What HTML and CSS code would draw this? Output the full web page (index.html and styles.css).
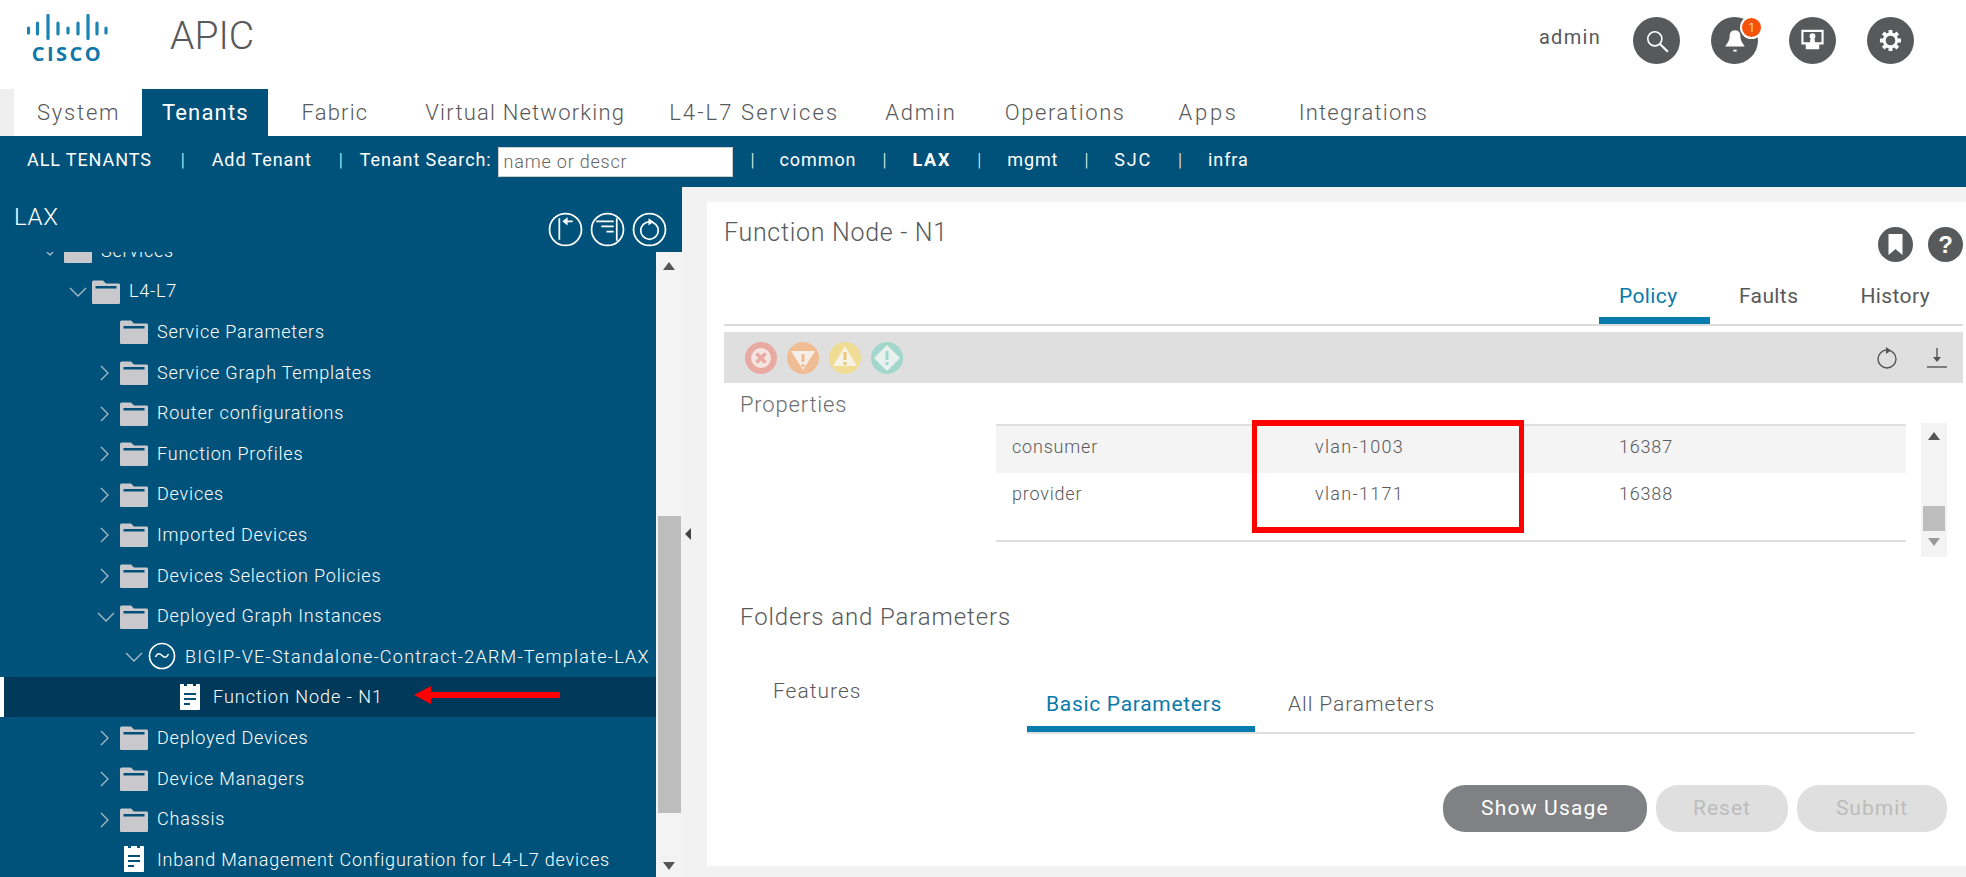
FILE: index.html
```html
<!DOCTYPE html>
<html lang="en">
<head>
<meta charset="utf-8">
<title>APIC</title>
<link rel="stylesheet" href="styles.css">
</head>
<body>
<svg class="sprite" aria-hidden="true">
  <symbol id="folder" viewBox="0 0 28 28">
    <path d="M0 5.500C0 4.500.5 3.500 1.500 3.500H11l3 3h12.500c1 0 1.500.7 1.500 1.500v17.500c0 1-.6 1.500-1.500 1.500h-25C.5 27 0 26.500 0 25.500z" fill="#c9c9cd"/>
    <rect x="3.500" y="9" width="21" height="2.500" fill="#00507a"/>
  </symbol>
  <symbol id="doc" viewBox="0 0 20 28">
    <path d="M1 1h3v2h3V1h6v2h3V1h3c.5 0 1 .4 1 1v24c0 .6-.5 1-1 1H1c-.5 0-1-.4-1-1V2c0-.6.5-1 1-1z" fill="#fff"/>
    <path d="M4 10h12v2H4zM4 15h12v2H4zM4 20h6v2H4z" fill="#00507a"/>
  </symbol>
  <symbol id="chev-r" viewBox="0 0 28 28"><path d="M9 8l7 7-7 7" fill="none" stroke="#a9bcc8" stroke-width="1.300"/></symbol>
  <symbol id="chev-d" viewBox="0 0 28 28"><path d="M6 11l8 8 8-8" fill="none" stroke="#a9bcc8" stroke-width="1.300"/></symbol>
</svg>

<header class="topbar">
  <div class="logo">
    <svg class="logo-bars" viewBox="0 0 81 26" width="81" height="26">
      <path d="M1.500 14v5M10.500 9v11M21 1.500v23M31 9v11M41 14v5M51 9v11M61 1.500v23M70 9v11M79 14v5" stroke="#1c84b4" stroke-width="3.200" stroke-linecap="round" fill="none"/>
    </svg>
    <span class="logo-word">CISCO</span>
  </div>
  <h1 class="app-name">APIC</h1>
  <div class="user-tools">
    <span class="user-name">admin</span>
    <span class="round-btn">
      <svg viewBox="0 0 24 24" width="26" height="26"><circle cx="10" cy="10" r="6.500" fill="none" stroke="#fff" stroke-width="1.500"/><path d="M14.500 14.500L22 22" stroke="#fff" stroke-width="2"/></svg>
    </span>
    <span class="round-btn">
      <svg viewBox="0 0 24 24" width="26" height="26"><path d="M12 2c4 0 5 3 5 6 0 4 3 7 4 9H3c1-2 4-5 4-9 0-3 1-6 5-6z" fill="#fff"/><path d="M10.500 20h3v1.800h-3z" fill="#fff"/></svg>
      <span class="badge">1</span>
    </span>
    <span class="round-btn">
      <svg viewBox="0 0 24 24" width="23" height="23"><path d="M1.500 2h21v13h-21z" fill="none" stroke="#fff" stroke-width="2.200"/><circle cx="12" cy="7.500" r="3" fill="#fff"/><path d="M10 10h4l1 5h4v6H5v-6h4z" fill="#fff"/></svg>
    </span>
    <span class="round-btn">
      <svg viewBox="0 0 24 24" width="23" height="23"><path d="M10 1h4v3l2 .8 2.200-2.200 2.800 2.800L18.800 7.600l.9 2.400H23v4h-3.300l-.9 2.400 2.200 2.200-2.800 2.800-2.200-2.200-2 .8v3h-4v-3l-2-.8-2.200 2.200-2.800-2.800 2.200-2.200-.9-2.400H1v-4h3.300l.9-2.400L3 5.400l2.800-2.800L8 4.800l2-.8z" fill="#fff"/><circle cx="12" cy="12" r="5" fill="#58595b"/></svg>
    </span>
  </div>
</header>

<nav class="main-nav">
  <span class="nav-stub"></span>
  <a class="nav-item nav-system">System</a>
  <a class="nav-item nav-active">Tenants</a>
  <a class="nav-item nav-fabric">Fabric</a>
  <a class="nav-item nav-vn">Virtual Networking</a>
  <a class="nav-item nav-l47">L4-L7 Services</a>
  <a class="nav-item nav-admin">Admin</a>
  <a class="nav-item nav-ops">Operations</a>
  <a class="nav-item nav-apps">Apps</a>
  <a class="nav-item nav-int">Integrations</a>
</nav>

<div class="tenant-bar">
  <a class="tb-item">ALL TENANTS</a><span class="tb-sep tb-sep-first">|</span>
  <a class="tb-item">Add Tenant</a><span class="tb-sep tb-sep-tight-r">|</span>
  <label class="tb-search">Tenant Search:<input class="tb-input" type="text" placeholder="name or descr"></label><span class="tb-sep tb-sep-tight-l">|</span>
  <a class="tb-item">common</a><span class="tb-sep">|</span>
  <a class="tb-item tb-bold">LAX</a><span class="tb-sep">|</span>
  <a class="tb-item">mgmt</a><span class="tb-sep">|</span>
  <a class="tb-item tb-sjc">SJC</a><span class="tb-sep">|</span>
  <a class="tb-item">infra</a>
</div>

<main class="workspace">
  <aside class="left-panel">
    <div class="left-head">
      <span class="left-title">LAX</span>
      <div class="left-tools">
        <svg class="ring" viewBox="0 0 34 34"><circle cx="17" cy="17" r="15.500"/><path d="M11 6v21M18 9h6"/><path class="ring-fill" d="M19 5l-5 4 5 4z"/></svg>
        <svg class="ring" viewBox="0 0 34 34"><circle cx="17" cy="17" r="15.500"/><path d="M26 6v22M6 9h17M11 14h12M16 19h7"/></svg>
        <svg class="ring" viewBox="0 0 34 34"><circle cx="17" cy="17" r="15.500"/><circle cx="17" cy="18" r="8.500"/><path class="ring-fill" d="M16 6l5 3.500-5 3.500z"/></svg>
      </div>
    </div>
    <div class="tree-wrap">
      <ul class="tree">
        <li class="row lv0"><svg class="slot"><use href="#chev-d"/></svg><svg class="slot"><use href="#folder"/></svg><span class="label">Services</span></li>
        <li class="row lv1"><svg class="slot"><use href="#chev-d"/></svg><svg class="slot"><use href="#folder"/></svg><span class="label">L4-L7</span></li>
        <li class="row lv2"><span class="slot"></span><svg class="slot"><use href="#folder"/></svg><span class="label">Service Parameters</span></li>
        <li class="row lv2"><svg class="slot"><use href="#chev-r"/></svg><svg class="slot"><use href="#folder"/></svg><span class="label">Service Graph Templates</span></li>
        <li class="row lv2"><svg class="slot"><use href="#chev-r"/></svg><svg class="slot"><use href="#folder"/></svg><span class="label">Router configurations</span></li>
        <li class="row lv2"><svg class="slot"><use href="#chev-r"/></svg><svg class="slot"><use href="#folder"/></svg><span class="label">Function Profiles</span></li>
        <li class="row lv2"><svg class="slot"><use href="#chev-r"/></svg><svg class="slot"><use href="#folder"/></svg><span class="label">Devices</span></li>
        <li class="row lv2"><svg class="slot"><use href="#chev-r"/></svg><svg class="slot"><use href="#folder"/></svg><span class="label">Imported Devices</span></li>
        <li class="row lv2"><svg class="slot"><use href="#chev-r"/></svg><svg class="slot"><use href="#folder"/></svg><span class="label">Devices Selection Policies</span></li>
        <li class="row lv2"><svg class="slot"><use href="#chev-d"/></svg><svg class="slot"><use href="#folder"/></svg><span class="label">Deployed Graph Instances</span></li>
        <li class="row lv3"><svg class="slot"><use href="#chev-d"/></svg>
          <svg class="slot" viewBox="0 0 28 28"><circle cx="14" cy="14" r="12.500" fill="none" stroke="#fff" stroke-width="1.600"/><path d="M7.500 15c2-4 4-4 6.500-1.500s4.500 2.500 6.500-1.500" fill="none" stroke="#fff" stroke-width="1.600"/></svg>
          <span class="label label-wide">BIGIP-VE-Standalone-Contract-2ARM-Template-LAX</span></li>
        <li class="row lv4 row-selected"><span class="slot slot-none"></span><svg class="slot doc-slot"><use href="#doc"/></svg><span class="label label-node">Function Node - N1</span></li>
        <li class="row lv2"><svg class="slot"><use href="#chev-r"/></svg><svg class="slot"><use href="#folder"/></svg><span class="label">Deployed Devices</span></li>
        <li class="row lv2"><svg class="slot"><use href="#chev-r"/></svg><svg class="slot"><use href="#folder"/></svg><span class="label">Device Managers</span></li>
        <li class="row lv2"><svg class="slot"><use href="#chev-r"/></svg><svg class="slot"><use href="#folder"/></svg><span class="label">Chassis</span></li>
        <li class="row lv2"><span class="slot"></span><svg class="slot doc-slot"><use href="#doc"/></svg><span class="label">Inband Management Configuration for L4-L7 devices</span></li>
      </ul>
      <div class="vscroll tree-scroll">
        <span class="arrow-up"></span>
        <span class="thumb tree-thumb"></span>
        <span class="arrow-down"></span>
      </div>
    </div>
    <svg class="red-arrow" viewBox="0 0 146 18" width="146" height="18"><path d="M0 9L17 0v6h129v6H17v6z" fill="#f00"/></svg>
  </aside>

  <div class="splitter"><span class="split-handle"></span></div>

  <section class="content">
    <div class="card">
      <div class="title-row">
        <h2 class="page-title">Function Node - N1</h2>
        <div class="title-tools">
          <span class="mini-btn"><svg viewBox="0 0 35 35" width="35" height="35"><path d="M10.500 7h14v21l-7-6-7 6z" fill="#fff"/></svg></span>
          <span class="mini-btn mini-help">?</span>
        </div>
      </div>
      <div class="tabs">
        <a class="tab tab-on">Policy</a>
        <a class="tab tab-faults">Faults</a>
        <a class="tab tab-history">History</a>
      </div>
      <div class="toolbar">
        <div class="faults">
          <svg class="fault" viewBox="0 0 32 32"><circle cx="16" cy="16" r="16" fill="#e9aaa2"/><circle cx="16" cy="16" r="10" fill="#f3e3e1"/><path d="M11.500 11.500l9 9M20.500 11.500l-9 9" stroke="#e9aaa2" stroke-width="3.500"/></svg>
          <svg class="fault" viewBox="0 0 32 32"><circle cx="16" cy="16" r="16" fill="#efbc93"/><path d="M4 9h24L16 28z" fill="#f5eee6"/><path d="M16 12v8M16 22v3" stroke="#efbc93" stroke-width="3"/></svg>
          <svg class="fault" viewBox="0 0 32 32"><circle cx="16" cy="16" r="16" fill="#f0dc92"/><path d="M16 4l12 20H4z" fill="#f6f2e4"/><path d="M16 10v8M16 20v3" stroke="#e8c878" stroke-width="3"/></svg>
          <svg class="fault" viewBox="0 0 32 32"><circle cx="16" cy="16" r="16" fill="#a3d6cd"/><path d="M16 3l13 13-13 13L3 16z" fill="#e9f1ef"/><path d="M16 9v9M16 20v3" stroke="#a3d6cd" stroke-width="3"/></svg>
        </div>
        <div class="tool-right">
          <svg viewBox="0 0 24 24" width="24" height="24"><circle cx="12" cy="13" r="9" fill="none" stroke="#555" stroke-width="1.400"/><path d="M11 1l5 3.500-5 3.500z" fill="#555"/></svg>
          <svg viewBox="0 0 24 24" width="24" height="24"><path d="M12 2v13" stroke="#555" stroke-width="1.400"/><path d="M8 11h8l-4 5z" fill="#555"/><path d="M2 21h20" stroke="#555" stroke-width="1.400"/></svg>
        </div>
      </div>
      <h3 class="section-title">Properties</h3>
      <div class="table-row">
        <div class="table">
          <div class="tr tr-alt"><span class="td td-a">consumer</span><span class="td td-b">vlan-1003</span><span class="td">16387</span></div>
          <div class="tr"><span class="td td-a">provider</span><span class="td td-b">vlan-1171</span><span class="td">16388</span></div>
        </div>
        <div class="vscroll table-scroll">
          <span class="arrow-up"></span>
          <span class="thumb table-thumb"></span>
          <span class="arrow-down arrow-dim"></span>
        </div>
      </div>
      <h3 class="section-title folders">Folders and Parameters</h3>
      <div class="features">
        <span class="features-label">Features</span>
        <div class="subtabs">
          <a class="subtab subtab-on">Basic Parameters</a>
          <a class="subtab">All Parameters</a>
        </div>
      </div>
      <div class="actions">
        <button class="btn btn-usage">Show Usage</button>
        <button class="btn btn-off btn-reset">Reset</button>
        <button class="btn btn-off btn-submit">Submit</button>
      </div>
      <div class="red-box"></div>
    </div>
  </section>
</main>
</body>
</html>
```

FILE: styles.css
```css
* { box-sizing: border-box; }
html, body { margin: 0; padding: 0; }
body {
  width: 1966px;
  height: 877px;
  overflow: hidden;
  background: #fff;
  color: #58595b;
  font-family: Roboto, "Liberation Sans", sans-serif;
  font-weight: 300;
  display: flex;
  flex-direction: column;
}
.sprite { display: none; }
h1, h2, h3, ul { margin: 0; padding: 0; font-weight: 300; }
ul { list-style: none; }

/* top bar */
.topbar { height: 89px; flex: none; display: flex; padding-left: 27px; position: relative; }
.logo { width: 81px; padding-top: 14px; display: flex; flex-direction: column; align-items: center; }
.logo-bars { display: block; }
.logo-word {
  font: 700 20px/20px "Open Sans", "Liberation Sans", sans-serif;
  color: #0f78a8;
  letter-spacing: 2.500px;
  margin-top: 4px;
}
.app-name { margin-left: 62px; margin-top: 15px; font-size: 39px; line-height: 42px; color: #58595b; }
.user-tools { margin-left: auto; padding: 17px 52px 0 0; display: flex; gap: 31px; }
.user-name { font-size: 20px; font-weight: 400; line-height: 40px; margin-right: 1px; letter-spacing: 1.300px; }
.round-btn {
  width: 47px; height: 47px; border-radius: 50%; background: #58595b;
  display: flex; align-items: center; justify-content: center; position: relative;
}
.badge {
  position: absolute; left: 29px; top: -1px; width: 23px; height: 23px; border-radius: 50%;
  background: #f6520a; border: 2px solid #fff; color: #fff; font-size: 13px; line-height: 19px; text-align: center;
}

/* main nav */
.main-nav { height: 47px; flex: none; display: flex; align-items: stretch; font-size: 22px; letter-spacing: 1.200px; }
.nav-stub { width: 14px; background: #efefef; }
.nav-item { line-height: 47px; color: #58595b; }
.nav-system { margin-left: 23px; letter-spacing: 1.800px; }
.nav-active { margin-left: 22px; width: 126px; background: #00527a; color: #fff; text-align: center; font-weight: 400; }
.nav-fabric { margin-left: 33px; }
.nav-vn { margin-left: 57px; }
.nav-l47 { margin-left: 44px; letter-spacing: 2.100px; }
.nav-admin { margin-left: 46px; letter-spacing: 1.800px; }
.nav-ops { margin-left: 48px; letter-spacing: 1.600px; }
.nav-apps { margin-left: 53px; letter-spacing: 2.700px; }
.nav-int { margin-left: 60px; }

/* tenant bar */
.tenant-bar {
  height: 51px; flex: none; background: #00527a; color: #fff; display: flex; align-items: center;
  padding: 0 0 4px 27px; font-size: 18px; font-weight: 400; letter-spacing: .9px;
}
.tb-sep { margin: 0 26px; font-weight: 300; letter-spacing: 0; }
.tb-sep-first { margin: 0 27px 0 29px; }
.tb-sep-tight-r { margin: 0 17px 0 27px; }
.tb-sep-tight-l { margin: 0 25px 0 18px; }
.tb-bold { font-weight: 700; letter-spacing: 1.800px; }
.tb-sjc { letter-spacing: 1.800px; }
.tb-search { display: flex; align-items: center; gap: 6px; }
.tb-input {
  width: 235px; height: 30px; margin-top: 4px; border: 1px solid #ccc; background: #fff; padding: 0 5px;
  font: 300 18px Roboto, sans-serif; letter-spacing: .8px; color: #555;
}
.tb-input::placeholder { color: #666; opacity: 1; }

/* workspace */
.workspace { flex: 1; display: flex; min-height: 0; }
.left-panel { width: 682px; flex: none; background: #00527a; color: #fff; display: flex; flex-direction: column; position: relative; }
.left-head { height: 65px; flex: none; display: flex; padding: 12px 15px 0 14px; }
.left-title { font-size: 24px; line-height: 36px; letter-spacing: .7px; }
.left-tools { margin-left: auto; padding-top: 13px; display: flex; gap: 7px; }
.ring { width: 35px; height: 35px; fill: none; stroke: #fff; stroke-width: 1.700; }
.ring-fill { fill: #fff; stroke: none; }
.tree-wrap { flex: 1; display: flex; min-height: 0; overflow: hidden; }
.tree { flex: 1; margin-top: -22px; min-width: 0; }
.row { height: 40.600px; display: flex; align-items: center; font-size: 18px; white-space: nowrap; letter-spacing: .8px; }
.lv0 { padding-left: 36px; }
.lv1 { padding-left: 64px; }
.lv2 { padding-left: 92px; }
.lv3 { padding-left: 120px; }
.lv4 { padding-left: 148px; }
.slot { width: 28px; height: 28px; flex: none; display: block; }
.label { margin-left: 9px; }
.label-wide { letter-spacing: 1.250px; }
.label-node { letter-spacing: 1px; }
.row-selected { background: #00395a; border-left: 4px solid #fff; padding-left: 144px; }
.vscroll { background: #f3f3f3; display: flex; flex-direction: column; align-items: center; position: relative; }
.tree-scroll { width: 26px; flex: none; }
.arrow-up, .arrow-down { width: 0; height: 0; border-left: 6px solid transparent; border-right: 6px solid transparent; position: absolute; }
.arrow-up { border-bottom: 8px solid #555; }
.arrow-down { border-top: 8px solid #555; }
.arrow-dim { border-top-color: #999; }
.tree-scroll .arrow-up { top: 10px; }
.tree-scroll .arrow-down { bottom: 7px; }
.thumb { position: absolute; background: #bdbdbd; }
.tree-thumb { top: 264px; height: 297px; width: 23px; }
.red-arrow { position: absolute; left: 414px; top: 499px; }

.splitter { width: 25px; flex: none; background: #f2f2f2; position: relative; }
.split-handle {
  position: absolute; left: 3px; top: 341px; width: 0; height: 0;
  border-top: 6px solid transparent; border-bottom: 6px solid transparent; border-right: 6px solid #444;
}

/* content */
.content { flex: 1; min-width: 0; background: #f2f2f2; padding: 15px 0 11px 0; display: flex; }
.card { flex: 1; background: #fff; padding: 0 3px 0 17px; position: relative; min-width: 0; }
.title-row { height: 65px; display: flex; justify-content: space-between; }
.page-title { font-size: 25px; line-height: 30px; padding: 16px 0 0 0; color: #58595b; letter-spacing: .7px; }
.title-tools { display: flex; gap: 15px; padding-top: 25px; }
.mini-btn { width: 35px; height: 35px; border-radius: 50%; background: #58595b; display: block; }
.mini-help { color: #fff; font: 700 24px/35px "Liberation Sans", sans-serif; text-align: center; }
.tabs { height: 59px; display: flex; justify-content: flex-end; border-bottom: 2px solid #dcdcdc; padding-right: 33px; font-size: 21px; font-weight: 400; letter-spacing: .4px; }
.tab { height: 57px; padding-top: 17px; line-height: 24px; }
.tab-on { color: #0a7aaa; width: 111px; padding-left: 20px; border-bottom: 7px solid #067bad; }
.tab-faults { margin-left: 29px; }
.tab-history { margin-left: 62px; }
.toolbar { margin-top: 6px; height: 51px; background: #dfdfdf; display: flex; justify-content: space-between; align-items: center; padding: 0 14px 0 21px; }
.faults { display: flex; gap: 10px; }
.fault { width: 32px; height: 32px; }
.tool-right { display: flex; gap: 26px; }
.section-title { font-size: 22px; line-height: 41px; padding: 1px 0 0 16px; height: 41px; color: #6d6e70; letter-spacing: .8px; }
.table-row { display: flex; align-items: flex-start; padding-left: 272px; }
.table { width: 910px; height: 118px; border-top: 2px solid #dfdfdf; border-bottom: 2px solid #dfdfdf; font-size: 18px; letter-spacing: .8px; }
.tr { height: 46px; display: flex; align-items: center; padding: 0 0 6px 16px; }
.tr-alt { height: 47px; background: #f4f4f4; }
.td-a { width: 303px; }
.td-b { width: 304px; letter-spacing: 1.300px; }
.table-scroll { width: 26px; height: 134px; margin: -1px 0 0 15px; }
.table-scroll .arrow-up { top: 9px; }
.table-scroll .arrow-down { bottom: 11px; }
.table-thumb { top: 83px; height: 25px; width: 22px; }
.section-title.folders { font-size: 24px; line-height: 30px; height: 30px; padding-top: 1px; margin-top: 44px; color: #58595b; letter-spacing: .9px; }
.features { display: flex; align-items: flex-start; }
.features-label { width: 303px; padding: 45px 0 0 49px; font-size: 21px; line-height: 30px; color: #58595b; letter-spacing: 1px; }
.subtabs { width: 888px; margin-top: 57px; display: flex; border-bottom: 2px solid #dfdfdf; font-size: 21px; height: 46px; letter-spacing: .9px; }
.subtab { line-height: 32px; margin-left: 33px; }
.subtab-on { color: #0a7aaa; margin-left: 0; width: 228px; padding-left: 19px; border-bottom: 6px solid #067bad; font-weight: 400; letter-spacing: .7px; }
.actions { display: flex; justify-content: flex-end; gap: 9px; padding-right: 16px; margin-top: 51px; }
.btn { height: 47px; border: 0; border-radius: 22px; font: 400 21px Roboto, sans-serif; color: #fff; background: #808185; padding: 0 0 2px; letter-spacing: 1.200px; }
.btn-usage { width: 204px; }
.btn-off { background: #dfdfdf; color: #bcbcbc; letter-spacing: 1px; }
.btn-reset { width: 132px; }
.btn-submit { width: 150px; }
.red-box { position: absolute; left: 545px; top: 218px; width: 272px; height: 113px; border-style: solid; border-color: #f00; border-width: 6px 5px; }
```
